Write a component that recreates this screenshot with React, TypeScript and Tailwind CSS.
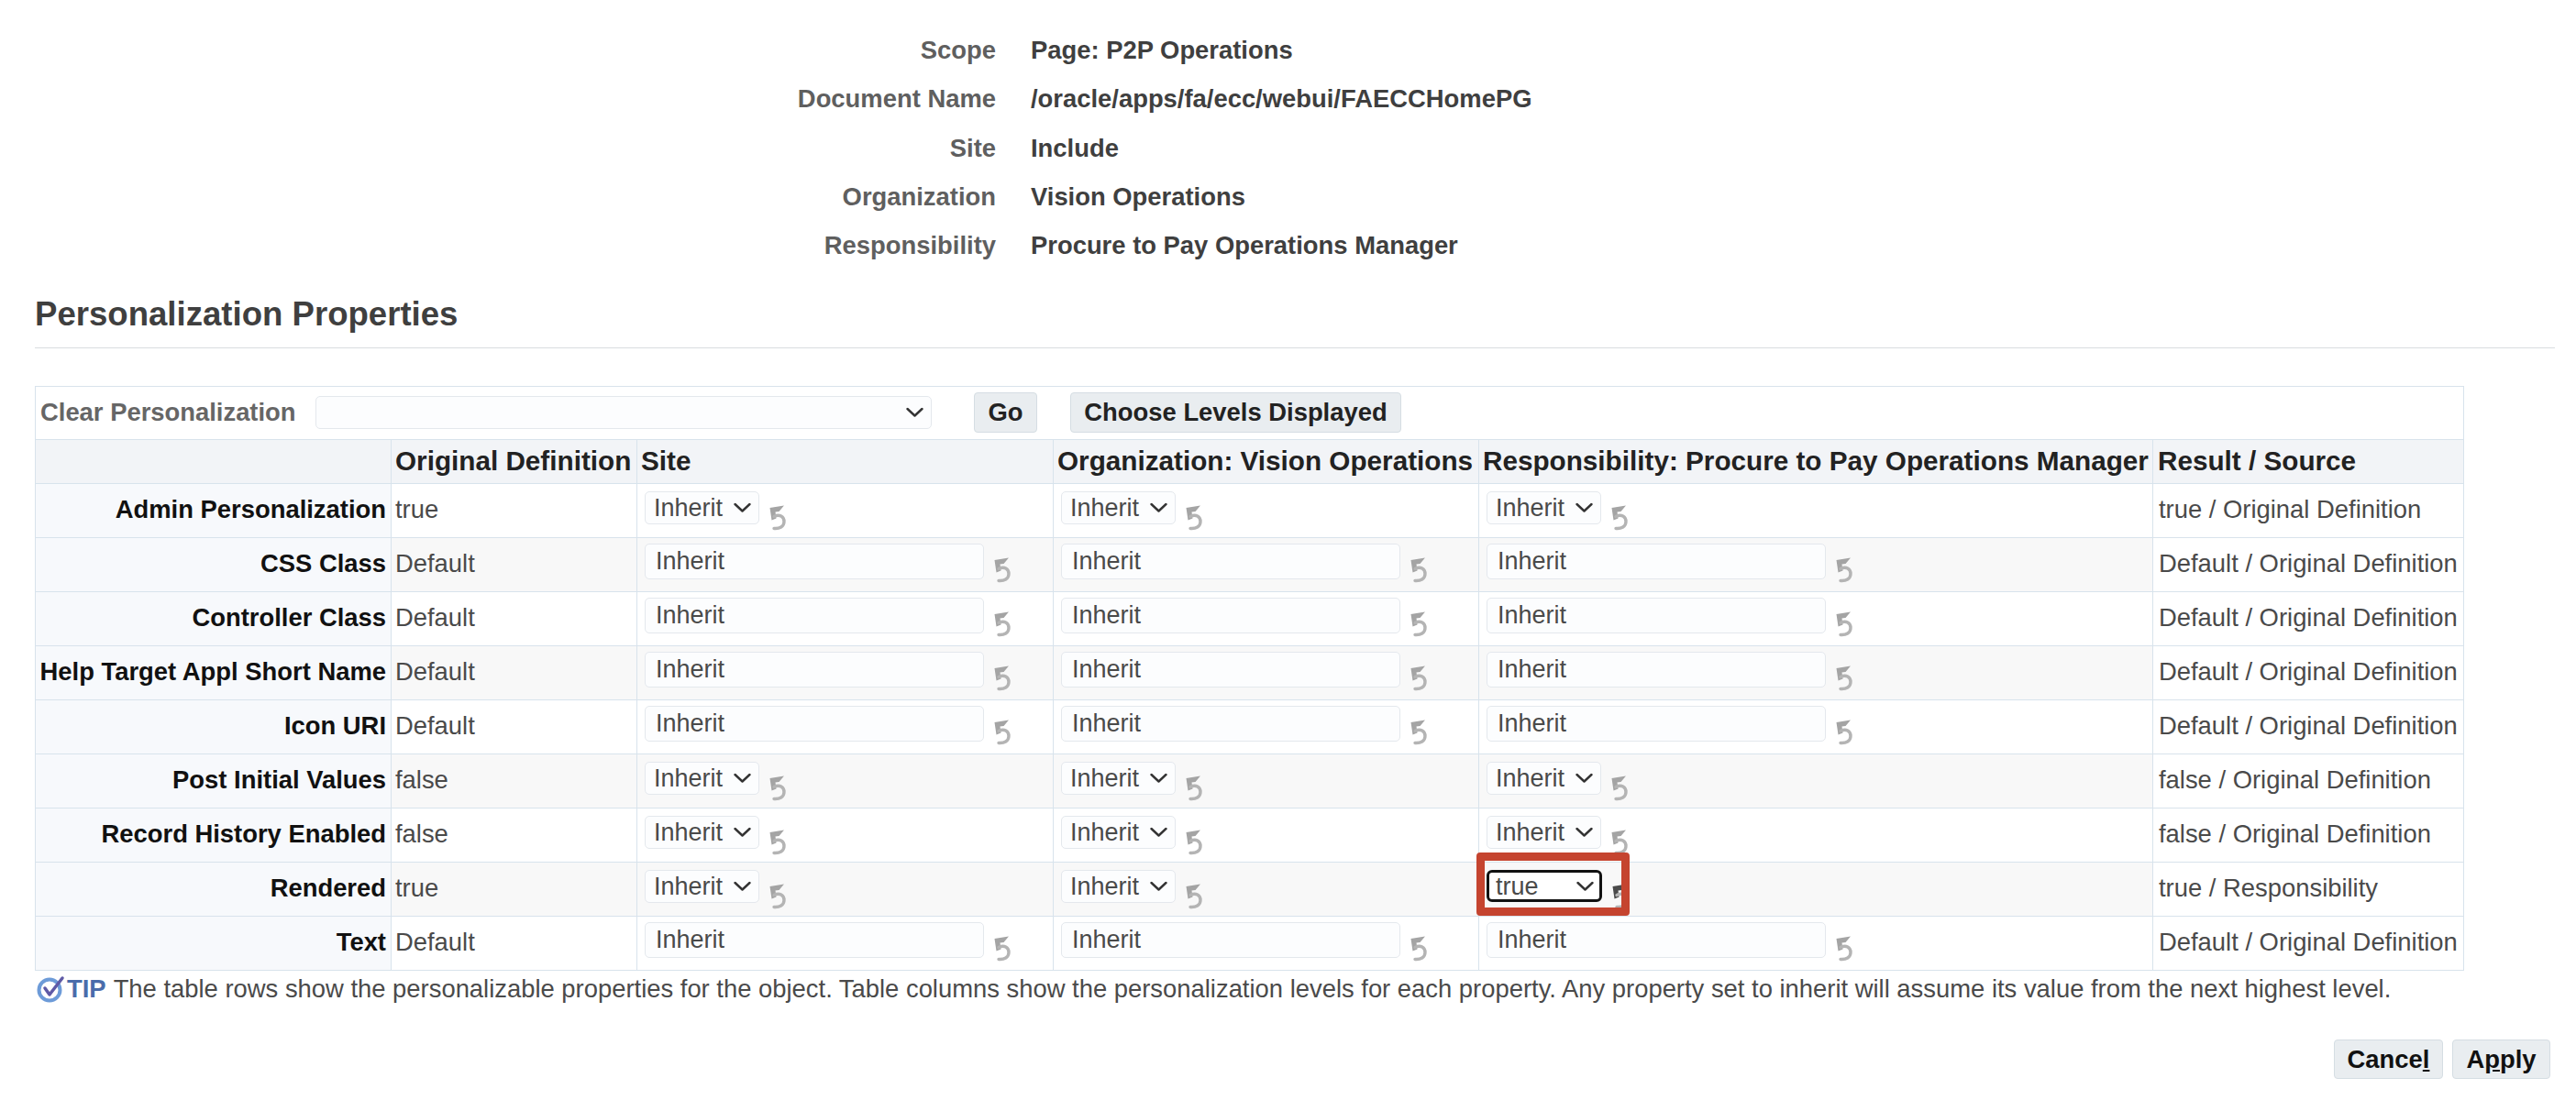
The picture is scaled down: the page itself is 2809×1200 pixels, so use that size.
const font = "font-['Liberation_Sans',Arial,sans-serif]";

const scope = [
  ["Scope", "Page: P2P Operations"],
  ["Document Name", "/oracle/apps/fa/ecc/webui/FAECCHomePG"],
  ["Site", "Include"],
  ["Organization", "Vision Operations"],
  ["Responsibility", "Procure to Pay Operations Manager"],
];

type Row = { label: string; original: string; kind: "select" | "input"; result: string };

const rows: Row[] = [
  { label: "Admin Personalization", original: "true", kind: "select", result: "true / Original Definition" },
  { label: "CSS Class", original: "Default", kind: "input", result: "Default / Original Definition" },
  { label: "Controller Class", original: "Default", kind: "input", result: "Default / Original Definition" },
  { label: "Help Target Appl Short Name", original: "Default", kind: "input", result: "Default / Original Definition" },
  { label: "Icon URI", original: "Default", kind: "input", result: "Default / Original Definition" },
  { label: "Post Initial Values", original: "false", kind: "select", result: "false / Original Definition" },
  { label: "Record History Enabled", original: "false", kind: "select", result: "false / Original Definition" },
  { label: "Rendered", original: "true", kind: "select", result: "true / Responsibility" },
  { label: "Text", original: "Default", kind: "input", result: "Default / Original Definition" },
];

function UndoIcon({ dark }: { dark?: boolean }) {
  const head = dark ? "#4a4a4a" : "#a4a4a4";
  return (
    <svg width="18" height="28" viewBox="0 0 18 28" fill="none" className="shrink-0">
      <path d="M0.5 3L16 0.5L10.5 7L6.5 7.5L7.5 14.5L2.5 16.5z" fill={head} />
      <path d="M5 12.5C11 9.5 16 12.5 16 18C16 23.5 11 26 5 25.5" stroke="#b4b4b4" strokeWidth="3.4" strokeLinecap="round" />
    </svg>
  );
}

function Chevron() {
  return (
    <svg width="19" height="11" viewBox="0 0 19 11" fill="none" className="absolute right-[9px] top-1/2 -translate-y-1/2 pointer-events-none">
      <path d="M1.5 1.5L9.5 9L17.5 1.5" stroke="#333" strokeWidth="2.4" strokeLinecap="round" strokeLinejoin="round" />
    </svg>
  );
}

function LevelSelect({ value, focused }: { value: string; focused?: boolean }) {
  return (
    <div className="relative">
      <select
        defaultValue={value}
        className={
          focused
            ? "block appearance-none w-[126px] h-[35px] pl-[7px] rounded-[6px] border-[3px] border-[#111] bg-white text-[27px] leading-[28px] text-[#4a4a4a]"
            : "block appearance-none w-[125px] h-[36px] pl-[9px] rounded-[5px] border border-[#e4e8ed] bg-[#fcfdfe] text-[27px] leading-[28px] text-[#4a4a4a]"
        }
      >
        <option>{value}</option>
      </select>
      <Chevron />
    </div>
  );
}

function LevelCell({ row, marked }: { row: Row; marked?: boolean }) {
  if (row.kind === "input") {
    return (
      <td className="border border-[#d8e3ec] px-[8px] align-top">
        <div className="flex items-start gap-[11px] pt-[6px]">
          <input
            readOnly
            defaultValue="Inherit"
            className="w-[370px] h-[39px] px-[11px] rounded-[5px] border border-[#e4e8ed] bg-[#fcfdfe] text-[27px] text-[#4a4a4a]"
          />
          <div className="pt-[15px]"><UndoIcon /></div>
        </div>
      </td>
    );
  }
  return (
    <td className="relative border border-[#d8e3ec] px-[8px] align-top">
      <div className="flex items-start gap-[11px] pt-[8px]">
        <LevelSelect value={marked ? "true" : "Inherit"} focused={marked} />
        <div className="pt-[15px]"><UndoIcon dark={marked} /></div>
      </div>
      {marked && (
        <div className="absolute left-[-3px] top-[-11px] w-[167px] h-[69px] rounded-[4px] border-[9px] border-[#c5442f]" />
      )}
    </td>
  );
}

export default function App() {
  return (
    <div className={`${font} w-[2809px] h-[1200px] bg-white text-[#4a4a4a] overflow-hidden`}>
      <div className="grid grid-cols-[1086px_1fr] gap-x-[38px] gap-y-[21.3px] pt-[39px] text-[27.4px] font-bold leading-[32px]">
        {scope.map(([k, v]) => (
          <div key={k} className="contents">
            <div className="text-right text-[#5f5f5f]">{k}</div>
            <div className="text-[#3f3f3f]">{v}</div>
          </div>
        ))}
      </div>

      <div className="ml-[38px] mr-[23px] mt-[36px] pb-[13px] border-b border-[#d9dde0] text-[36.6px] leading-[46px] font-bold text-[#3f3f3f]">
        Personalization Properties
      </div>

      <table className="ml-[38px] mt-[41px] w-[2648px] table-fixed border-collapse border border-[#d8e3ec] text-[27.4px] whitespace-nowrap">
        <colgroup>
          <col className="w-[388px]" />
          <col className="w-[268px]" />
          <col className="w-[454px]" />
          <col className="w-[464px]" />
          <col className="w-[735px]" />
          <col className="w-[339px]" />
        </colgroup>
        <thead>
          <tr className="h-[58px] border border-[#d8e3ec]">
            <td colSpan={6} className="px-[5px] pb-[2px]">
              <div className="flex items-center">
                <span className="w-[300px] font-bold text-[#666]">Clear Personalization</span>
                <div className="relative">
                  <select className="block appearance-none w-[672px] h-[36px] rounded-[5px] border border-[#e4e8ed] bg-[#fcfdfe]" />
                  <Chevron />
                </div>
                <button className="ml-[46px] w-[69px] h-[44px] rounded-[4px] border border-[#d5dde3] bg-[#e9edf0] font-bold text-[#222]">
                  Go
                </button>
                <button className="ml-[36px] w-[361px] h-[44px] rounded-[4px] border border-[#d5dde3] bg-[#e9edf0] font-bold text-[#222]">
                  Choose Levels Displayed
                </button>
              </div>
            </td>
          </tr>
          <tr className="h-[48px] bg-[#f2f4f7] font-bold text-[#222] text-left text-[29.7px]">
            <th className="border border-[#d8e3ec]" />
            <th className="border border-[#d8e3ec] px-[4px]">Original Definition</th>
            <th className="border border-[#d8e3ec] px-[4px]">Site</th>
            <th className="border border-[#d8e3ec] px-[4px]">Organization: Vision Operations</th>
            <th className="border border-[#d8e3ec] px-[4px]">Responsibility: Procure to Pay Operations Manager</th>
            <th className="border border-[#d8e3ec] px-[5px]">Result / Source</th>
          </tr>
        </thead>
        <tbody>
          {rows.map((r, i) => (
            <tr key={r.label} className={`h-[59px] ${i % 2 === 1 ? "bg-[#f8f8f8]" : "bg-white"}`}>
              <th className="border border-[#d8e3ec] bg-[#f7f9fc] pl-[4px] pr-[5px] pb-[3px] text-right font-bold text-[#111]">{r.label}</th>
              <td className="border border-[#d8e3ec] px-[4px] pb-[3px] text-[#4a4a4a]">{r.original}</td>
              <LevelCell row={r} />
              <LevelCell row={r} />
              <LevelCell row={r} marked={r.label === "Rendered"} />
              <td className="border border-[#d8e3ec] px-[6px] pb-[3px] text-[#4a4a4a] bg-white">{r.result}</td>
            </tr>
          ))}
        </tbody>
      </table>

      <div className="ml-[40px] mt-[4px] flex items-center text-[27.4px] leading-[32px]">
        <svg width="32" height="30" viewBox="0 0 32 30" fill="none" className="shrink-0">
          <circle cx="14" cy="16" r="11.5" stroke="#6d9bd8" strokeWidth="4" />
          <path d="M9 14l5 7L28 3" stroke="#5f5aa6" strokeWidth="3.5" strokeLinecap="round" strokeLinejoin="round" />
        </svg>
        <span className="ml-[1px] font-bold text-[#4a6cab]">TIP</span>
        <span className="ml-[8px]">
          The table rows show the personalizable properties for the object. Table columns show the personalization levels for each property. Any property set to inherit will assume its value from the next highest level.
        </span>
      </div>

      <div className="mt-[39px] pr-[28px] flex justify-end gap-[10px] text-[27.4px] font-bold text-[#111]">
        <button className="w-[119px] h-[43px] rounded-[4px] border border-[#d5dde3] bg-[#e9edf0]">
          Cance<span className="underline">l</span>
        </button>
        <button className="w-[107px] h-[43px] rounded-[4px] border border-[#d5dde3] bg-[#e9edf0]">
          A<span className="underline">p</span>ply
        </button>
      </div>
    </div>
  );
}
